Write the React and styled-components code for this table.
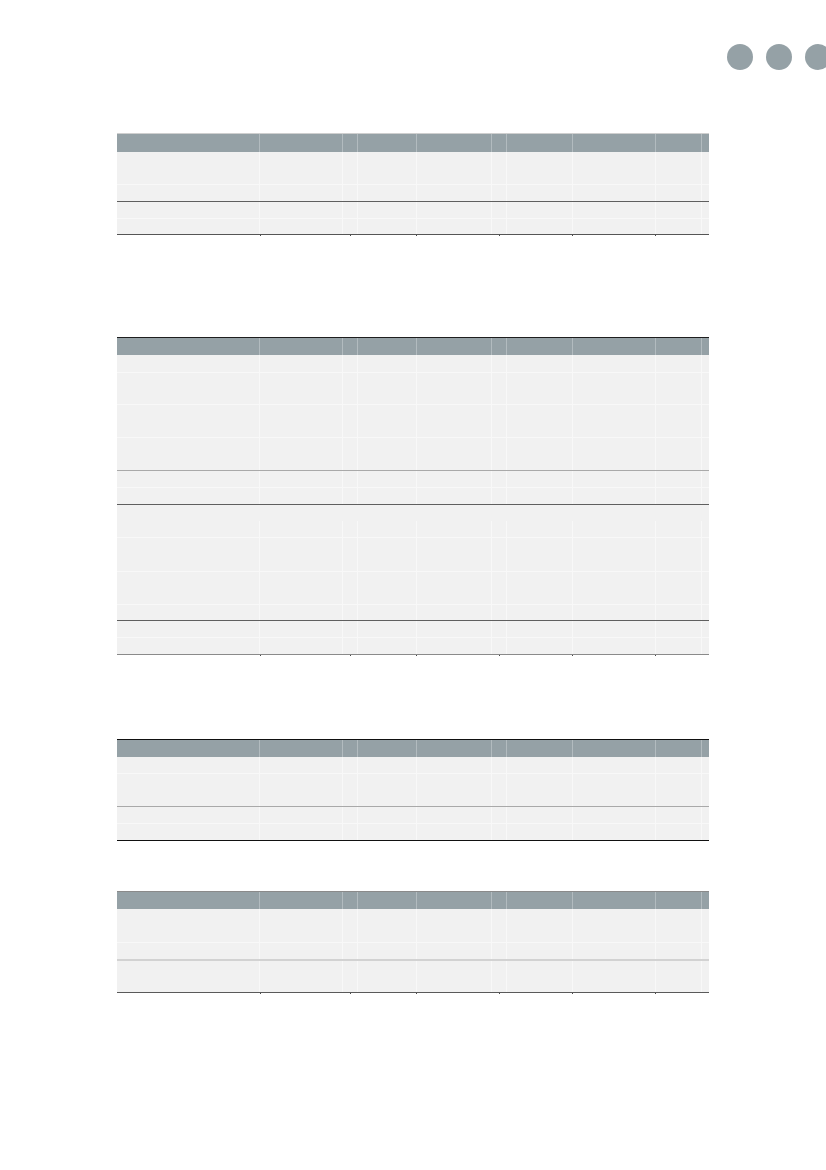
import React from "react";
import styled, { createGlobalStyle } from "styled-components";

const Global = createGlobalStyle`
  html, body { margin: 0; padding: 0; background: #ffffff; }
  body { font-family: "Liberation Sans", Arial, sans-serif; overflow-x: hidden; }
  * { box-sizing: border-box; }
`;

const COLS = "143px 83px 15px 59px 75px 15px 66px 83px 46px 7px";
const TICKS = "143px 90px 66px 83px 73px 83px 54px";

const Page = styled.div`
  width: 826px;
  min-height: 1170px;
  padding-top: 44px;
  overflow: hidden;
  display: flex;
  flex-direction: column;
`;

const Dots = styled.div`
  display: flex;
  justify-content: flex-end;
  gap: 13px;
  margin-right: -5px;
  height: 26px;
`;

const Dot = styled.span`
  width: 26px;
  height: 26px;
  border-radius: 50%;
  background: #95a1a6;
  flex: none;
`;

const TableWrap = styled.section`
  margin-left: 117px;
  width: 592px;
  margin-top: ${(p) => p.$gap}px;
  display: flex;
  flex-direction: column;
`;

const Rule = styled.div`
  height: ${(p) => p.$w || 1}px;
  background: ${(p) => p.$c};
`;

const Header = styled.div`
  display: grid;
  grid-template-columns: ${COLS};
  height: ${(p) => p.$h}px;
  background: #95a1a6;
`;

const HeadCell = styled.div`
  border-right: 1px solid #b2bbbf;
  &:last-child { border-right: none; }
`;

const lineColors = {
  none: "transparent",
  faint: "#f8f8f8",
  mid: "#a9a9a9",
  dark: "#5f5f5f",
  light2: "#d2d2d2",
};

const Row = styled.div`
  display: grid;
  grid-template-columns: ${(p) => (p.$span ? "1fr" : COLS)};
  height: ${(p) => p.$h}px;
  background: #f1f1f1;
  border-top: ${(p) => (p.$line === "none" ? "0" : p.$line === "light2" ? "2px" : "1px")} solid
    ${(p) => lineColors[p.$line]};
`;

const Cell = styled.div`
  border-right: 1px solid #f8f8f8;
  &:last-child { border-right: none; }
`;

const TickRow = styled.div`
  display: grid;
  grid-template-columns: ${TICKS};
  height: 1px;
`;

const Tick = styled.div`
  border-left: 1px solid ${(p) => (p.$first ? "transparent" : "#4a4a4a")};
`;

const tables = [
  {
    gap: 63,
    top: "#cfcfcf",
    header: 18,
    rows: [
      { h: 32, line: "none" },
      { h: 17, line: "faint" },
      { h: 17, line: "dark" },
      { h: 16, line: "faint" },
    ],
    bottom: "#555555",
    ticks: true,
  },
  {
    gap: 101,
    top: "#1e1e1e",
    header: 17,
    rows: [
      { h: 17, line: "none" },
      { h: 32, line: "faint" },
      { h: 33, line: "faint" },
      { h: 33, line: "faint" },
      { h: 17, line: "mid" },
      { h: 17, line: "faint" },
      { h: 17, line: "dark", span: true },
      { h: 16, line: "none" },
      { h: 34, line: "faint" },
      { h: 33, line: "faint" },
      { h: 16, line: "faint" },
      { h: 17, line: "dark" },
      { h: 17, line: "faint" },
    ],
    bottom: "#8a8a8a",
    ticks: true,
  },
  {
    gap: 83,
    top: "#111111",
    header: 17,
    rows: [
      { h: 16, line: "none" },
      { h: 33, line: "faint" },
      { h: 17, line: "mid" },
      { h: 17, line: "faint" },
    ],
    bottom: "#111111",
    ticks: false,
  },
  {
    gap: 49,
    top: "#8a8a8a",
    header: 17,
    rows: [
      { h: 33, line: "none" },
      { h: 17, line: "faint" },
      { h: 33, line: "light2" },
    ],
    bottom: "#5a5a5a",
    ticks: true,
  },
];

const colCount = 10;

function Table({ t }) {
  return (
    <TableWrap $gap={t.gap}>
      <Rule $c={t.top} />
      <Header $h={t.header}>
        {Array.from({ length: colCount }).map((_, i) => (
          <HeadCell key={i} />
        ))}
      </Header>
      {t.rows.map((r, i) => (
        <Row key={i} $h={r.h} $line={r.line} $span={r.span}>
          {r.span ? (
            <Cell />
          ) : (
            Array.from({ length: colCount }).map((_, j) => <Cell key={j} />)
          )}
        </Row>
      ))}
      <Rule $c={t.bottom} />
      <TickRow>
        {Array.from({ length: 7 }).map((_, i) => (
          <Tick key={i} $first={i === 0 || !t.ticks} />
        ))}
      </TickRow>
    </TableWrap>
  );
}

export default function App() {
  return (
    <>
      <Global />
      <Page>
        <Dots>
          <Dot />
          <Dot />
          <Dot />
        </Dots>
        {tables.map((t, i) => (
          <Table key={i} t={t} />
        ))}
      </Page>
    </>
  );
}
